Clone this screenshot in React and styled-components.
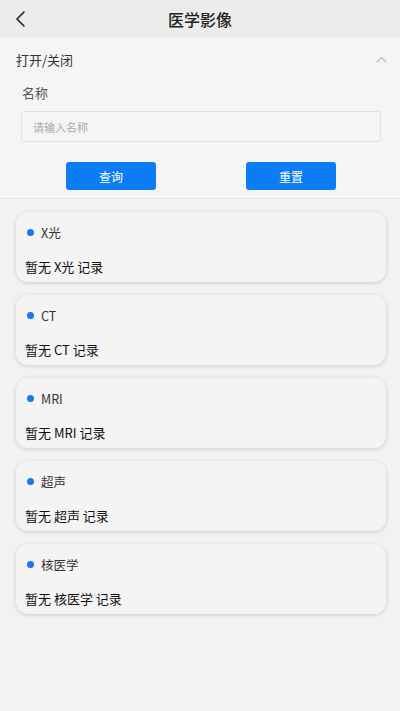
import React from "react";
import styled, { createGlobalStyle } from "styled-components";

const GlobalStyle = createGlobalStyle`
  html, body {
    margin: 0;
    padding: 0;
    background: #f2f2f2;
    font-family: "Noto Sans CJK SC", "Noto Sans", sans-serif;
  }
`;

const Page = styled.div`
  width: 400px;
  min-height: 711px;
  background: #f2f2f2;
`;

const Header = styled.div`
  height: 38px;
  background: #ececec;
  display: flex;
  align-items: center;
  justify-content: center;
  position: relative;
`;

const Back = styled.div`
  position: absolute;
  left: 14px;
  top: 10px;
  width: 16px;
  height: 18px;
  display: flex;
  align-items: center;
`;

const Title = styled.h1`
  margin: 0;
  font-size: 16px;
  font-weight: 500;
  color: #222;
`;

const Filter = styled.div`
  background: #f5f5f5;
  border-bottom: 1px solid #e6e6e6;
  padding: 10px 0 8px;
`;

const ToggleRow = styled.div`
  display: flex;
  align-items: center;
  justify-content: space-between;
  padding: 0 13px 0 16px;
  height: 22px;
`;

const ToggleText = styled.span`
  font-size: 13px;
  color: #333;
`;

const FieldLabel = styled.div`
  font-size: 13px;
  color: #555;
  margin: 14px 0 0 22px;
  height: 18px;
  line-height: 18px;
`;

const Input = styled.input`
  display: block;
  box-sizing: border-box;
  width: 360px;
  height: 31px;
  margin: 9px 0 0 21px;
  padding: 0 11px;
  border: 1px solid #e0e0e0;
  border-radius: 3px;
  background: #f5f5f5;
  font-family: inherit;
  font-size: 11px;
  color: #333;
  outline: none;

  &::placeholder {
    color: #aaa;
  }
`;

const Buttons = styled.div`
  display: flex;
  justify-content: space-between;
  padding: 0 64px 0 66px;
  margin-top: 20px;
`;

const Button = styled.button`
  width: 90px;
  height: 28px;
  border: none;
  border-radius: 3px;
  background: #0b7cf4;
  color: #fff;
  font-family: inherit;
  font-size: 12px;
  padding: 0;
`;

const List = styled.div`
  display: flex;
  flex-direction: column;
  gap: 13px;
  padding: 13px 14px 0 16px;
`;

const Card = styled.div`
  height: 70px;
  box-sizing: border-box;
  border-radius: 12px;
  background: #f4f4f4;
  box-shadow: 0 1px 4px rgba(0, 0, 0, 0.16);
  padding: 10px 9px 0 9px;
`;

const CardHead = styled.div`
  display: flex;
  align-items: center;
  height: 20px;
  padding-left: 2px;
`;

const Dot = styled.span`
  width: 7px;
  height: 7px;
  border-radius: 50%;
  background: #1f74f0;
  margin-right: 7px;
`;

const CardTitle = styled.span`
  font-size: 12.5px;
  color: #333;
`;

const CardBody = styled.div`
  margin-top: 15px;
  font-size: 13px;
  font-weight: 400;
  color: #111;
`;

const categories = ["X光", "CT", "MRI", "超声", "核医学"];

export default function App() {
  return (
    <Page>
      <GlobalStyle />
      <Header>
        <Back>
          <svg width="12" height="18" viewBox="0 0 12 18" fill="none">
            <path d="M10 2 L3 9 L10 16" stroke="#222" strokeWidth="1.6" strokeLinecap="round" strokeLinejoin="round" />
          </svg>
        </Back>
        <Title>医学影像</Title>
      </Header>
      <Filter>
        <ToggleRow>
          <ToggleText>打开/关闭</ToggleText>
          <svg width="11" height="7" viewBox="0 0 11 7" fill="none">
            <path d="M1 6 L5.5 1.5 L10 6" stroke="#bbb" strokeWidth="1.1" strokeLinecap="round" strokeLinejoin="round" />
          </svg>
        </ToggleRow>
        <FieldLabel>名称</FieldLabel>
        <Input placeholder="请输入名称" />
        <Buttons>
          <Button>查询</Button>
          <Button>重置</Button>
        </Buttons>
      </Filter>
      <List>
        {categories.map((c) => (
          <Card key={c}>
            <CardHead>
              <Dot />
              <CardTitle>{c}</CardTitle>
            </CardHead>
            <CardBody>暂无 {c} 记录</CardBody>
          </Card>
        ))}
      </List>
    </Page>
  );
}
